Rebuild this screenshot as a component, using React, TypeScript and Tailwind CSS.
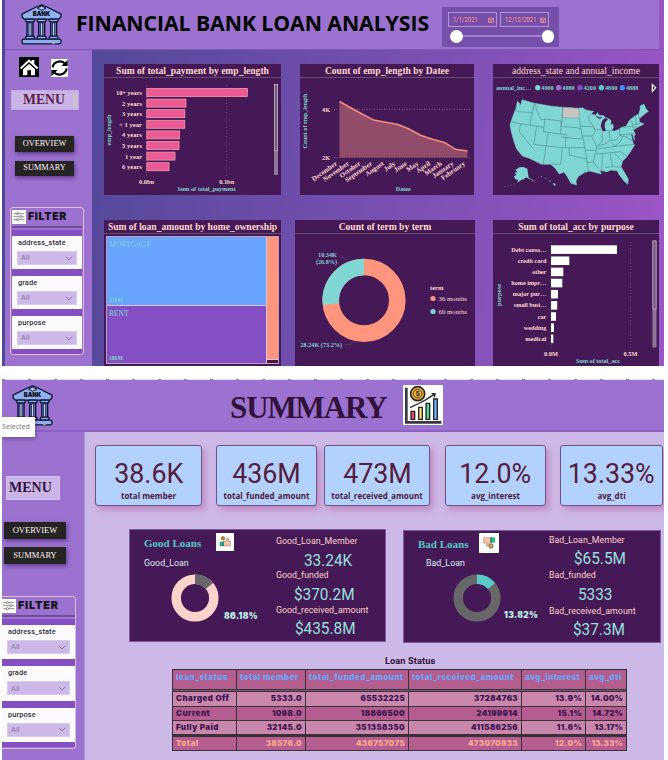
import React from "react";

const serif = "font-['Liberation_Serif',serif]";
const din = "font-['Roboto',sans-serif]";
const black = "font-['Inter',sans-serif] font-black";
const segoe = "font-['Open_Sans',sans-serif]";

function BankLogo() {
  return (
    <svg className="block h-[41px] w-[41px] shrink-0" viewBox="63 12 123 122">
      <g stroke="#0d1130" strokeWidth="4" strokeLinejoin="round">
        <path d="M66 42 L112 19 L125 14 L138 19 L183 42 V50 L176 57 H73 L66 50Z" fill="#8fb0f2" />
        <path d="M112 24 L125 18 L138 24 L125 30Z" fill="#b7cdfb" strokeWidth="3" />
        {[78, 113, 149].map((x) => (
          <g key={x}>
            <path d={`M${x + 3} 64 h18 v50 h-18z`} fill="#5f7fd6" />
            <path d={`M${x + 9} 68 h6 v42 h-6z`} fill="#e6eeff" strokeWidth="2.5" />
            <rect x={x - 1} y="57" width="26" height="8" rx="3" fill="#8fb0f2" />
            <rect x={x - 1} y="108" width="26" height="9" rx="3" fill="#8fb0f2" />
          </g>
        ))}
        <rect x="66" y="117" width="117" height="14" rx="5" fill="#8fb0f2" />
      </g>
      <path d="M158 130h5" stroke="#fff" strokeWidth="3" />
      <text x="124.500" y="49" fontSize="19" fontWeight="900" textAnchor="middle" textLength="52" lengthAdjust="spacingAndGlyphs" fill="#05060f" fontFamily="Inter, sans-serif">BANK</text>
    </svg>
  );
}

function SlidersIcon() {
  return (
    <svg className="block h-[14px] w-[14px] shrink-0 bg-white" viewBox="0 0 42 42" fill="none" stroke="#444" strokeWidth="1.800">
      <path d="M4 11h9M20 11h17M4 20h19M30 20h7M4 29h9M20 29h17" />
      <circle cx="16.500" cy="11" r="3.300" />
      <circle cx="26.500" cy="20" r="3.300" />
      <circle cx="16.500" cy="29" r="3.300" />
    </svg>
  );
}

function NavButton({ children, cls }: { children: string; cls: string }) {
  return (
    <div className={`flex items-center justify-center bg-[#252423] ${serif} leading-none text-[#fff6fb] shadow-[1px_2px_4px_rgba(70,35,120,0.7)] ${cls}`}>
      {children}
    </div>
  );
}

function Slicers({ cls }: { cls: string }) {
  return (
    <div className={`flex flex-col bg-[#834fc3] ${cls}`}>
      {["address_state", "grade", "purpose"].map((name) => (
        <div key={name} className="flex min-h-0 flex-1 flex-col bg-[#fdfbff] px-[5px]">
          <span className={`${din} px-[1px] pt-[1px] text-[7.400px] font-medium leading-[12px] tracking-[0.1px] text-[#2f2d33]`}>{name}</span>
          <div className="mt-[2px] flex h-[14px] items-center justify-between border border-[#d9cbee] bg-[#cdb9e7] px-[3px]">
            <span className={`${din} text-[7.500px] leading-none text-[#85789a]`}>All</span>
            <svg className="h-[5px] w-[8px]" viewBox="0 0 8 5" fill="none" stroke="#85789a"><path d="M.8.8 4 4 7.200.8" /></svg>
          </div>
        </div>
      ))}
    </div>
  );
}

function Card({ title, cls, titleCls, children }: { title: string; cls: string; titleCls: string; children: React.ReactNode }) {
  return (
    <section className={`flex shrink-0 flex-col overflow-hidden bg-[#451956] ${cls}`}>
      <h2 className={`${serif} flex h-[14px] shrink-0 items-center justify-center whitespace-nowrap border-b border-[#645069] leading-none text-[#ffd8cf] ${titleCls}`}>{title}</h2>
      {children}
    </section>
  );
}

const SVG_FONT = "Liberation Serif, serif";
const PINK = "#ffd9d2";
const TEAL = "#7fd6d3";

function PaymentChart() {
  const rows: [string, number, number][] = [
    ["10+ years", 247.3, 26], ["2 years", 186, 20], ["3 years", 184.800, 20], ["< 1 year", 184.800, 23],
    ["4 years", 179.600, 20], ["5 years", 179, 20], ["1 year", 175, 17], ["6 years", 169, 20],
  ];
  return (
    <svg className="block h-[117px] w-[177px]" viewBox="104 78 177 117" fontFamily={SVG_FONT} fontWeight="bold" fontSize="6.800" fill={PINK}>
      <path d="M146.500 85v91M226.700 85v91" stroke="#79567f" strokeWidth=".8" strokeDasharray="1 2" />
      {rows.map(([t, x, w], i) => (
        <g key={t}>
          <text x="142" y={95 + i * 10.600} textAnchor="end" textLength={w} lengthAdjust="spacingAndGlyphs">{t}</text>
          <rect x="146.800" y={88.500 + i * 10.600} width={x - 146.800} height="8" fill="#ec5a94" stroke="#f49ab0" strokeWidth=".8" />
        </g>
      ))}
      <text x="146.500" y="183.500" textAnchor="middle" textLength="15" lengthAdjust="spacingAndGlyphs">0.0bn</text>
      <text x="226.700" y="183.500" textAnchor="middle" textLength="15" lengthAdjust="spacingAndGlyphs">0.1bn</text>
      <text x="206.500" y="190.500" textAnchor="middle" fill={TEAL} textLength="58" lengthAdjust="spacingAndGlyphs">Sum of total_payment</text>
      <text transform="translate(111 130) rotate(-90)" textAnchor="middle" fill={TEAL} textLength="31" lengthAdjust="spacingAndGlyphs">emp_length</text>
      <rect x="274" y="84" width="4" height="91" fill="#8f7699" />
      <rect x="274.400" y="84.400" width="3.200" height="66" fill="#75587f" stroke="#c0b0c6" strokeWidth=".8" />
    </svg>
  );
}

function DateChart() {
  const months = ["December", "November", "October", "September", "August", "July", "June", "May", "April", "March", "January", "February"];
  return (
    <svg className="block h-[117px] w-[174px]" viewBox="300 78 174 117" fontFamily={SVG_FONT} fontWeight="bold" fontSize="6.800" fill={PINK}>
      <path d="M334 109.300H471M334 157.500H471" stroke="#8d6c8f" strokeWidth=".8" strokeDasharray="1 1.500" />
      <path d="M339.500 101.500 351 108 363 114.500 374.500 120.300 386 122.300 398 124.500 409 129 421 135.500 432.500 139.300 444.500 142.500 455.500 149.300 467.500 151V157.500H339.500Z" fill="#914c69" />
      <path d="M352 109.300H471" stroke="#b98595" strokeWidth=".6" strokeDasharray="1 1.500" opacity=".3" />
      <path d="M339.500 101.500 351 108 363 114.500 374.500 120.300 386 122.300 398 124.500 409 129 421 135.500 432.500 139.300 444.500 142.500 455.500 149.300 467.500 151" fill="none" stroke="#f58d80" strokeWidth="1.500" />
      <text x="330" y="111.800" textAnchor="end" textLength="8" lengthAdjust="spacingAndGlyphs">4K</text>
      <text x="330" y="160" textAnchor="end" textLength="8" lengthAdjust="spacingAndGlyphs">2K</text>
      {months.map((m, i) => (
        <text key={m} transform={`translate(${337.800 + i * 11.620} 164.500) rotate(-35)`} textAnchor="end">{m}</text>
      ))}
      <text x="403.300" y="191" textAnchor="middle" fill={TEAL} textLength="15" lengthAdjust="spacingAndGlyphs">Datee</text>
      <text transform="translate(307 121) rotate(-90)" textAnchor="middle" fill={TEAL} textLength="55" lengthAdjust="spacingAndGlyphs">Count of emp_length</text>
    </svg>
  );
}

function StateMap() {
  const legend: [number, string, string][] = [
    [143, "4000", "#7fd6d3"], [206, "4080", "#9b72cf"], [270, "4200", "#834fc3"], [334, "4800", "#5bc9c6"], [397, "4888", "#3f8cff"],
  ];
  return (
    <svg className="block h-[117px] w-[166px]" viewBox="9 9 498 351" fontFamily={SVG_FONT} fontWeight="bold" fontSize="20" fill={TEAL}>
      <text x="18" y="44" textLength="105" lengthAdjust="spacingAndGlyphs">annual_inc…</text>
      {legend.map(([x, t, c]) => (
        <g key={t}>
          <circle cx={x} cy="38" r="8" fill={c} />
          <text x={x + 11} y="44" textLength="37" lengthAdjust="spacingAndGlyphs">{t}</text>
        </g>
      ))}
      <path d="M487 28v21l10-10.500z" fill="none" stroke="#fff" strokeWidth="3.500" />
      <path fill="#7fd6d3" stroke="#7fd6d3" strokeWidth="1.500" strokeLinejoin="round" d="M82 79 90 86 88 92 93 88 96 74 130 84 180 93 218 97 266 100 279 98 283 103 297 107 311 109 303 118 316 120 324 113 327 121 341 122 347 128 356 131 364 138 361 149 369 148 370 158 364 167 375 168 388 162 396 156 408 154 413 145 420 134 438 121 446 118 450 104 451 92 462 88 468 101 475 109 460 120 448 131 448 141 462 147 452 152 441 158 430 165 436 178 432 184 434 196 428 190 429 205 434 209 425 225 410 246 398 258 393 275 405 295 415 313 413 328 402 318 388 300 382 288 365 285 350 290 330 286 334 297 318 293 300 288 285 292 264 305 258 318 260 330 243 325 232 305 222 291 208 297 195 279 182 268 155 268 118 250 97 243 80 222 72 200 65 175 60 150 68 125 78 100Z" />
      <path d="M338 168 332 154 336 138 345 128 354 133 345 143 344 157 348 168Z M317 123l12 4 8-1-6 5-9-3z M423 178l3 8 2 12 3-2-4-18z" fill="#451956" />
      <path d="M218 97 266 100 268 129 217 128Z" fill="#c8c3c4" stroke="#4b7772" strokeWidth="1" />
      <path fill="none" stroke="#42807f" strokeWidth="1.600" strokeLinejoin="round" d="M75 103 85 110 128 113M133 85 127 115 122 132 120 151M137 86 139 104 150 126 154 135 165 133M63 141 120 151 162 157M92 147 88 170 130 222M140 154 131 210M133 208 170 213 224 218 286 218M165 132 214 138 211 177 160 170 165 132M218 97 214 155M217 155 262 158 274 164M213 186 227 188 278 192M211 177 229 179 225 218M175 173 168 213 160 268M217 218 212 268 185 267M280 190 284 218 286 225 290 252 238 240 238 219M268 129 272 158 278 190M272 154 310 155M297 118 296 135 310 153 316 168 306 186 320 212 320 224 314 240 310 262 326 281M276 183 306 183M285 226 318 226M290 252 291 262 310 262M291 262 295 290M310 162 333 164M316 121 330 133M336 168 337 196 328 210M357 168 360 196M347 168 365 167M322 214 345 207 360 197 378 195 390 179M388 163 390 180 431 176M394 157 428 154 431 164M320 222 385 213 433 208M316 237 375 232M337 237 335 288M360 235 368 274M345 277 368 275 392 277M372 234 398 260M375 232 392 230 412 244M390 180 398 185 390 202 375 212 365 204M398 183 410 186 426 196M424 137 430 154M436 123 440 150M445 118 449 134M430 148 450 146M432 157 444 155" />
      <path fill="#7fd6d3" d="M112 281 116 308 123 314 116 312 108 307 101 313 94 315 86 320 80 324 85 315 75 312 72 303 80 300 73 294 82 291 76 285 88 277 100 276Z M189 323 198 328 192 333Z M178 316l5 2-4 3zM166 309l4 2-3 2zM152 302l4 2-3 2z" />
      <path d="M117 308 127 313 137 322 126 318Z" fill="#5c7a76" />
      <path d="M43 334 63 331 78 325" fill="none" stroke="#4e6f72" strokeWidth="2" strokeDasharray="5 4" />
    </svg>
  );
}

function Treemap() {
  return (
    <div className={`${serif} m-[2px] flex h-[128px] gap-[1px] border border-[#b9a0c0] bg-[#d9c4e2] text-[7.500px] leading-none text-[#7fd6d3]`}>
      <div className="flex w-[159px] flex-col gap-[1px]">
        <div className="flex h-[68px] flex-col justify-between bg-[#68a3ff] px-[2px] pb-[1px] pt-[4px]">
          <span>MORTGAGE</span>
          <span className="w-[15px] origin-left scale-x-[0.850] text-[6.600px] font-bold">219M</span>
        </div>
        <div className="flex flex-1 flex-col justify-between bg-[#834fc3] px-[2px] pb-[1px] pt-[4px]">
          <span>RENT</span>
          <span className="w-[15px] origin-left scale-x-[0.850] text-[6.600px] font-bold">186M</span>
        </div>
      </div>
      <div className="flex flex-1 flex-col gap-[1px]">
        <div className="flex-1 bg-[#ff957c]" />
        <div className="h-[3px] bg-[#4d1a3f]" />
      </div>
    </div>
  );
}

function TermChart() {
  const c = 2 * Math.PI * 33.300;
  return (
    <svg className="block h-[132px] w-[180px]" viewBox="295 234 180 132" fontFamily={SVG_FONT} fontSize="7" fill={TEAL}>
      <circle cx="364" cy="300.300" r="33.300" fill="none" stroke="#ff957c" strokeWidth="16.600" />
      <circle cx="364" cy="300.300" r="33.300" fill="none" stroke="#7fd6d3" strokeWidth="16.600" strokeDasharray={`${c * 0.268} ${c}`} transform="rotate(173.500 364 300.300)" />
      <path d="M339 257.500h5l3 4M345 344.500h6l2-3" fill="none" stroke="#5b3d68" strokeWidth=".8" />
      <g fontWeight="bold">
        <text x="337" y="256.500" textAnchor="end" textLength="19" lengthAdjust="spacingAndGlyphs">10.34K</text>
        <text x="337" y="263.500" textAnchor="end" textLength="21" lengthAdjust="spacingAndGlyphs">(26.8%)</text>
        <text x="300.500" y="347" textLength="41.500" lengthAdjust="spacingAndGlyphs">28.24K (73.2%)</text>
        <text x="430" y="290" fill={PINK} textLength="13.500" lengthAdjust="spacingAndGlyphs">term</text>
      </g>
      <circle cx="433" cy="298.500" r="2.600" fill="#ff957c" />
      <circle cx="433" cy="311.500" r="2.600" fill="#7fd6d3" />
      <text x="438.500" y="300.500" fill={PINK} textLength="28.500" lengthAdjust="spacingAndGlyphs">36 months</text>
      <text x="438.500" y="313.500" fill={PINK} textLength="28.500" lengthAdjust="spacingAndGlyphs">60 months</text>
    </svg>
  );
}

function PurposeChart() {
  const rows: [string, number, number][] = [
    ["Debt conso…", 66, 35], ["credit card", 18.300, 28.500], ["other", 12.300, 14], ["home impr…", 11.300, 35], ["major pur…", 7, 33.500],
    ["small busi…", 6.200, 32.500], ["car", 5, 8.500], ["wedding", 3, 22.500], ["medical", 2.300, 21],
  ];
  return (
    <svg className="block h-[132px] w-[166px]" viewBox="493 234 166 132" fontFamily={SVG_FONT} fontWeight="bold" fontSize="7" fill={PINK}>
      <path d="M551 242v106M630.500 242v106" stroke="#79567f" strokeWidth=".8" strokeDasharray="1 2" />
      {rows.map(([t, v, w], i) => (
        <g key={t}>
          <text x="546.300" y={251.700 + i * 11.150} textAnchor="end" textLength={w} lengthAdjust="spacingAndGlyphs">{t}</text>
          <rect x="551" y={245.300 + i * 11.150} width={v} height="8.600" fill="#fff" />
        </g>
      ))}
      <text x="551" y="355.500" textAnchor="middle" textLength="14" lengthAdjust="spacingAndGlyphs">0.0M</text>
      <text x="630.500" y="355.500" textAnchor="middle" textLength="14" lengthAdjust="spacingAndGlyphs">0.5M</text>
      <text x="598" y="363.300" textAnchor="middle" fill={TEAL} textLength="44" lengthAdjust="spacingAndGlyphs">Sum of total_acc</text>
      <text transform="translate(501 295) rotate(-90)" textAnchor="middle" fill={TEAL} textLength="22" lengthAdjust="spacingAndGlyphs">purpose</text>
      <rect x="652.500" y="240.500" width="4" height="107" fill="#8f7699" />
      <rect x="652.900" y="241" width="3.200" height="68" fill="#75587f" stroke="#c0b0c6" strokeWidth=".8" />
    </svg>
  );
}

function DateField({ value, cls, textCls }: { value: string; cls: string; textCls: string }) {
  return (
    <div className={`${din} flex h-[15px] items-center justify-between border border-[#b695d2] pl-[4px] pr-[2px] text-[7.600px] leading-none text-[#ff9a94] ${cls}`}>
      <span className={`origin-left scale-x-[0.780] whitespace-nowrap ${textCls}`}>{value}</span>
      <svg className="h-[6px] w-[6px] shrink-0" viewBox="0 0 6 6" fill="none" stroke="#ff9a94" strokeWidth=".7"><path d="M.5 1h5v4.500h-5zM.5 2.300h5M2 3v2M3.500 3v2" /></svg>
    </div>
  );
}

function Overview() {
  return (
    <div className="flex h-[366px] w-[662px] flex-col bg-[linear-gradient(100deg,#4c4797_0%,#56499b_18%,#7a50b2_60%,#9a55c6_95%)] pl-[3px] pr-[5px]">
      <header className="flex h-[50px] shrink-0 items-start border-b border-[#8058b4] bg-[#9b72cf] pl-[16px] pt-[4px]">
        <BankLogo />
        <h1 className={`${segoe} ml-[14px] mt-[6px] w-[355px] whitespace-nowrap text-[21.200px] font-bold leading-[26px] text-black tracking-[-0.040px]`}>FINANCIAL BANK LOAN ANALYSIS</h1>
        <div className="ml-[11px] mt-[3px] h-[40px] w-[117px] bg-[#754fa9] px-[6px] pt-[5px]">
          <div className="flex gap-[3px]">
            <DateField value="1/1/2021" cls="w-[49px]" textCls="w-[30px]" />
            <DateField value="12/12/2021" cls="w-[49px]" textCls="w-[34px]" />
          </div>
          <div className="mt-[3px] flex w-[106px] items-center pl-[2px]">
            <i className="h-[12.500px] w-[12.500px] rounded-full bg-white" />
            <i className="h-[2px] flex-1 bg-[#a27fd0]" />
            <i className="h-[12.500px] w-[12.500px] rounded-full bg-white" />
          </div>
        </div>
      </header>
      <div className="flex min-h-0 flex-1">
        <aside className="flex w-[87px] shrink-0 flex-col bg-[#9b72cf]">
          <div className="ml-[14px] mt-[7px] flex items-center gap-[12px]">
            <svg className="h-[20px] w-[20px] bg-black" viewBox="0 0 60 60" fill="#fff">
              <path d="M3 32 30 7l8 7V9h8v12l12 11-4 5-24-22L7 37z" />
              <path d="M12 37 30 21l18 16v18H36V40H25v15H12z" />
            </svg>
            <svg className="mt-px h-[18px] w-[17px] bg-white" viewBox="0 0 51 54" fill="none" stroke="#000" strokeWidth="6.500">
              <path d="M5 25C7 9 30 0 42 14" />
              <path d="M47 28C45 45 22 54 9 40" />
              <path d="M50 2v19H31z M1 52V33h19z" fill="#000" stroke="none" />
            </svg>
          </div>
          <div className="ml-[6px] mt-[13px] flex h-[20px] w-[68px] items-center justify-between border border-[#c4abe8] bg-[#c9b3e7] pl-[11px] pr-[1px]">
            <span className={`${serif} text-[13.700px] font-bold leading-none text-[#5a1f48]`}>MENU</span>
            <i className="h-[15px] w-[4px] bg-[#c6c6c9]" />
          </div>
          <NavButton cls="ml-[10px] mt-[26px] h-[16px] w-[59px] text-[8.300px]">OVERVIEW</NavButton>
          <NavButton cls="ml-[10px] mt-[9px] h-[15px] w-[59px] text-[8.300px]">SUMMARY</NavButton>
          <div className="ml-[5px] mt-[31px] h-[148px] w-[74px] rounded-[3px] border border-[#e2b9cd] px-px pt-[2px]">
            <div className="flex h-[16px] items-start gap-[2px]">
              <SlidersIcon />
              <span className={`${black} mt-[1px] text-[10.500px] leading-[12px] tracking-[0.700px] text-[#17131c]`}>FILTER</span>
            </div>
            <div className="h-[2px] bg-[#6d4d97]" />
            <Slicers cls="mt-[2px] h-[124px] gap-[7px] pb-[5px] pt-[6px]" />
          </div>
        </aside>
        <main className="flex flex-col gap-[25px] pl-[12px] pt-[14px]">
          <div className="flex">
            <Card title="Sum of total_payment by emp_length" cls="h-[131px] w-[177px]" titleCls="text-[9.550px] font-bold"><PaymentChart /></Card>
            <Card title="Count of emp_length by Datee" cls="ml-[19px] h-[131px] w-[174px]" titleCls="text-[9.550px] font-bold"><DateChart /></Card>
            <Card title="address_state and annual_income" cls="ml-[19px] h-[131px] w-[166px]" titleCls="text-[9.550px]"><StateMap /></Card>
          </div>
          <div className="flex">
            <Card title="Sum of loan_amount by home_ownership" cls="h-[146px] w-[177px]" titleCls="text-[9.550px] font-bold"><Treemap /></Card>
            <Card title="Count of term by term" cls="ml-[14px] h-[146px] w-[180px]" titleCls="text-[9.600px] font-bold"><TermChart /></Card>
            <Card title="Sum of total_acc by purpose" cls="ml-[18px] h-[146px] w-[166px]" titleCls="text-[9.550px] font-bold"><PurposeChart /></Card>
          </div>
        </main>
      </div>
    </div>
  );
}

function Kpi({ value, label, cls }: { value: string; label: string; cls: string }) {
  return (
    <div className={`flex h-[61px] shrink-0 flex-col items-center rounded-[3px] border border-[#6d5583] bg-[#b2d1ff] shadow-[3px_4px_6px_rgba(185,110,175,0.65)] ${cls}`}>
      <span className={`${din} mt-[12px] origin-center scale-x-[0.940] whitespace-nowrap text-[28.500px] leading-[31px] text-[#561c3c]`}>{value}</span>
      <span className={`${segoe} mt-px whitespace-nowrap text-[8px] font-bold leading-[11px] text-[#4c1838]`}>{label}</span>
    </div>
  );
}

function LoanDonut({ share, base, part }: { share: number; base: string; part: string }) {
  const c = 2 * Math.PI * 18.800;
  return (
    <svg className="block h-[48px] w-[48px]" viewBox="0 0 48 48" fill="none" strokeWidth="9.500">
      <circle cx="24" cy="24" r="18.800" stroke={base} />
      <circle cx="24" cy="24" r="18.800" stroke={part} strokeDasharray={`${c * share} ${c}`} transform="rotate(-90 24 24)" />
    </svg>
  );
}

function ThumbIcon({ down }: { down?: boolean }) {
  return down ? (
    <svg className="block h-[20px] w-[20px] bg-white" viewBox="0 0 60 60">
      <path d="M14 14h22v16H30l-4 10-4-1 2-9H14z" fill="#f6c5a5" stroke="#9c7361" strokeWidth="1.500" />
      <path d="M36 13h12v16H36z" fill="#22c07d" />
      <path d="M34 13h4v16h-4z" fill="#1c7f6c" />
      <circle cx="36" cy="39" r="6.500" fill="#c99a2e" stroke="#55442c" strokeWidth="2" />
      <path d="M36 35v8" stroke="#fff" strokeWidth="1.500" />
    </svg>
  ) : (
    <svg className="block h-[18px] w-[18px] bg-white" viewBox="0 0 54 54">
      <path d="M22 25h7l4-10 5 2-1 8h6v14H22z" fill="#f6c5a5" stroke="#8a6656" strokeWidth="1.500" />
      <path d="M11 26h9v14h-9z" fill="#22b47d" />
      <path d="M19 26h4v13h-4z" fill="#1b5f7c" />
      <circle cx="21" cy="16" r="5.500" fill="#b8863b" stroke="#6c4b25" strokeWidth="1.500" />
    </svg>
  );
}

const metricLabel = `${din} whitespace-nowrap text-[8.850px] leading-[11px] text-[#ffd0c8]`;
const metricValue = `${din} whitespace-nowrap text-[16.500px] leading-[16px] text-[#96e0dc] self-start scale-x-[0.930] origin-left`;

function Summary() {
  return (
    <div className="flex h-[380px] w-[662px] flex-col overflow-hidden bg-[#cdb9e7]">
      <header className="flex h-[52px] shrink-0 items-start border-b-2 border-[#8b5fc3] bg-[#9b72cf] pl-[10px] pt-[5px]">
        <BankLogo />
        <h1 className={`${serif} ml-[177px] mt-[6px] w-[157px] whitespace-nowrap text-[31px] font-bold leading-[34px] tracking-[-1.100px] text-[#32123c]`}>SUMMARY</h1>
        <svg className="ml-[16px] h-[40px] w-[40px] bg-white" viewBox="0 0 120 120" fill="none" stroke="#26262a" strokeWidth="4">
          <path d="M10 8V112H115" strokeWidth="8" stroke="#38383c" />
          <circle cx="44" cy="26" r="21" fill="#f7b52c" strokeWidth="5" />
          <circle cx="44" cy="26" r="13" strokeWidth="2.500" />
          <text x="44" y="34" textAnchor="middle" fontSize="22" fontWeight="bold" fill="#26262a" stroke="none" fontFamily="Liberation Sans, sans-serif">$</text>
          <path d="M21 68 50 54 65 46 94 28M86 26l10 0-2 11" />
          <path d="M24 79h11v24H24z" fill="#ef4a5c" />
          <path d="M47 67h11v36H47z" fill="#f7dc6a" />
          <path d="M69 55h11v48H69z" fill="#4fd78d" />
          <path d="M92 42h11v61H92z" fill="#6cb5f5" />
        </svg>
      </header>
      <div className="flex min-h-0 flex-1">
        <aside className="relative flex w-[83px] shrink-0 flex-col border-r border-[#b394dc] bg-[#9b72cf]">
          <div className={`${segoe} absolute -top-[15px] left-0 flex h-[20px] w-[33px] items-center bg-white text-[7.200px] leading-none tracking-[-0.050px] text-[#77757b] shadow-[1px_2px_4px_rgba(60,30,100,0.4)]`}>Selected</div>
          <div className="ml-[4px] mt-[44px] flex h-[24px] w-[54px] items-center border border-[#d3bfec] bg-[#cbb5e6] pb-[1px] pl-[2px]">
            <span className={`${serif} text-[14px] font-bold leading-none text-[#32123c]`}>MENU</span>
          </div>
          <NavButton cls="ml-[2px] mt-[22px] h-[17px] w-[62px] text-[8.500px]">OVERVIEW</NavButton>
          <NavButton cls="ml-[2px] mt-[8px] h-[17px] w-[62px] text-[8.500px]">SUMMARY</NavButton>
          <div className="mt-[32px] h-[153px] w-[74px] rounded-r-[3px] border-y border-r border-[#e2b9cd] pt-[2px]">
            <div className="flex h-[16px] items-start gap-[2px]">
              <SlidersIcon />
              <span className={`${black} mt-[1px] text-[10.800px] leading-[12px] tracking-[0.800px] text-[#17131c]`}>FILTER</span>
            </div>
            <div className="h-[2px] bg-[#6d4d97]" />
            <Slicers cls="mt-[2px] h-[128px] gap-[7px] pb-[5px] pt-[6px]" />
          </div>
        </aside>
        <main className="min-w-0 flex-1">
          <div className="flex pl-[10px] pt-[13px]">
            <Kpi value="38.6K" label="total member" cls="w-[107px]" />
            <Kpi value="436M" label="total_funded_amount" cls="ml-[14px] w-[101px]" />
            <Kpi value="473M" label="total_received_amount" cls="ml-[7px] w-[106px]" />
            <Kpi value="12.0%" label="avg_interest" cls="ml-[15px] w-[101px]" />
            <Kpi value="13.33%" label="avg_dti" cls="ml-[14px] w-[103px]" />
          </div>
          <div className="flex items-start pl-[44px] pt-[23px]">
            <section className="flex h-[113px] w-[257px] border border-[#7b5a9c] bg-[#451956] pl-[14px]">
              <div className="w-[132px] pt-[3px]">
                <div className="flex items-center gap-[13px]">
                  <h3 className={`${serif} w-[59px] whitespace-nowrap pt-[3px] text-[11px] font-bold leading-none text-[#52cbc4]`}>Good Loans</h3>
                  <ThumbIcon />
                </div>
                <p className={`${din} mt-[7px] text-[8.900px] leading-[10px] text-[#d9eeee]`}>Good_Loan</p>
                <div className="mt-[6px] flex pl-[27px]">
                  <LoanDonut share={0.138} base="#ffd3c9" part="#67676a" />
                  <span className={`${black} ml-[5px] mt-[36px] text-[8.500px] leading-[12px] tracking-[0.300px] text-[#bff3ee]`}>86.18%</span>
                </div>
              </div>
              <div className="flex flex-col pt-[6px]">
                <span className={metricLabel}>Good_Loan_Member</span>
                <span className={`${metricValue} ml-[28px] mt-[6px]`}>33.24K</span>
                <span className={`${metricLabel} mt-[1px]`}>Good_funded</span>
                <span className={`${metricValue} ml-[18px] mt-[6px]`}>$370.2M</span>
                <span className={`${metricLabel} mt-[2px]`}>Good_received_amount</span>
                <span className={`${metricValue} ml-[19px] mt-[5px]`}>$435.8M</span>
              </div>
            </section>
            <section className="ml-[17px] mt-px flex h-[113px] w-[258px] border border-[#7b5a9c] bg-[#451956] pl-[14px]">
              <div className="w-[131px] pt-[2px]">
                <div className="flex items-center gap-[8px]">
                  <h3 className={`${serif} w-[53px] whitespace-nowrap pt-[2px] text-[11px] font-bold leading-none text-[#52cbc4]`}>Bad Loans</h3>
                  <ThumbIcon down />
                </div>
                <p className={`${din} mt-[5px] pl-[8px] text-[8.900px] leading-[10px] text-[#d9eeee]`}>Bad_Loan</p>
                <div className="mt-[6px] flex pl-[35px]">
                  <LoanDonut share={0.138} base="#67676a" part="#5bc9c6" />
                  <span className={`${black} ml-[3px] mt-[35px] text-[8.500px] leading-[12px] tracking-[0.300px] text-[#bff3ee]`}>13.82%</span>
                </div>
              </div>
              <div className="flex flex-col pt-[4px]">
                <span className={metricLabel}>Bad_Loan_Member</span>
                <span className={`${metricValue} ml-[25px] mt-[5px]`}>$65.5M</span>
                <span className={`${metricLabel} mt-[3px]`}>Bad_funded</span>
                <span className={`${metricValue} ml-[29px] mt-[6px]`}>5333</span>
                <span className={`${metricLabel} mt-[3px]`}>Bad_received_amount</span>
                <span className={`${metricValue} ml-[24px] mt-[5px]`}>$37.3M</span>
              </div>
            </section>
          </div>
          <h3 className={`${din} mt-[12px] pl-[300px] text-[9.200px] font-bold leading-[12px] tracking-[0.100px] text-[#2d1238]`}>Loan Status</h3>
          <LoanTable />
        </main>
      </div>
    </div>
  );
}

function LoanTable() {
  const cols = "grid grid-cols-[63px_68px_102px_112px_63px_40px] gap-px";
  const rows = [
    { cells: ["Charged Off", "5333.0", "65532225", "37284763", "13.9%", "14.00%"], row: "h-[14px]", cell: "bg-[#c887ab] text-[#3f1350]" },
    { cells: ["Current", "1098.0", "18866500", "24199914", "15.1%", "14.72%"], row: "mt-px h-[13px]", cell: "bg-[#b35e8e] text-[#3f1350]" },
    { cells: ["Fully Paid", "32145.0", "351358350", "411586256", "11.6%", "13.17%"], row: "mt-px h-[13px]", cell: "bg-[#c887ab] text-[#3f1350]" },
    { cells: ["Total", "38576.0", "436757075", "473070933", "12.0%", "13.33%"], row: "mt-[3px] h-[13px]", cell: "bg-[#b35e8e] text-[#ffa58f]" },
  ];
  return (
    <div className={`${black} ml-[87px] mt-[2px] w-[455px] border border-[#39313a] bg-[#39313a] text-[7.900px] leading-none`}>
      <div className={`${cols} h-[19px]`}>
        {["loan_status", "total member", "total_funded_amount", "total_received_amount", "avg_interest", "avg_dti"].map((h) => (
          <span key={h} className="whitespace-nowrap bg-[#b35e8e] pl-[3px] pt-[4px] tracking-[0.480px] text-[#6fa2f5]">{h}</span>
        ))}
      </div>
      <div className="my-px h-px bg-[#7d5a76]" />
      {rows.map(({ cells, row, cell }) => (
        <div key={cells[0]} className={`${cols} ${row}`}>
          {cells.map((v, i) => (
            <span key={i} className={`flex items-center whitespace-nowrap ${cell} ${i === 5 ? "justify-end pr-[3px] tracking-[0.200px]" : i ? "justify-end pr-[3px] tracking-[0.350px]" : "pl-[3px] tracking-[0.500px]"}`}>{v}</span>
          ))}
        </div>
      ))}
    </div>
  );
}

export default function App() {
  return (
    <div className="flex h-[760px] w-[668px] flex-col overflow-hidden bg-white pl-[2px]">
      <Overview />
      <div className="mt-[13px] h-px w-[662px] shrink-0 bg-[repeating-linear-gradient(90deg,#8d8a92_0px,#8d8a92_3px,#e3dff0_3px,#e3dff0_26px)]" />
      <Summary />
    </div>
  );
}
